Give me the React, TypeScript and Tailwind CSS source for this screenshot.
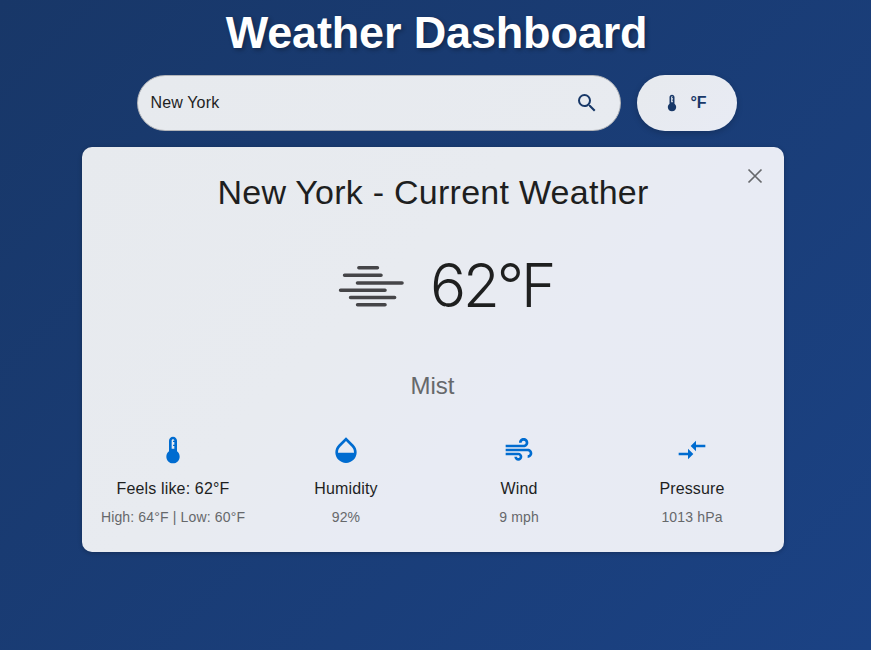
import type { ReactNode } from "react";
import {
  MdAir,
  MdCompareArrows,
  MdDeviceThermostat,
  MdOpacity,
  MdSearch,
} from "react-icons/md";

function MistIcon() {
  return (
    <svg
      width="100"
      height="100"
      viewBox="0 0 100 100"
      fill="none"
      stroke="#454548"
      strokeWidth="3.6"
      strokeLinecap="round"
    >
      <path d="M38.9 29.8H57.4M24.6 37.3H61M37.5 45H82M20.6 52.3H65M30.6 59.5H74.6M37.6 66.8H65" />
    </svg>
  );
}

function Stat({ icon, title, detail }: { icon: ReactNode; title: string; detail: string }) {
  return (
    <div className="flex flex-col items-center whitespace-nowrap text-center">
      <div className="size-8 text-[#006cd0]">{icon}</div>
      <div className="mt-[11px] pl-px text-[16px] leading-6 tracking-[0.15px]">{title}</div>
      <div className="mt-[6px] pl-px text-[14px] leading-5 tracking-[0.15px] text-[#66686b]">{detail}</div>
    </div>
  );
}

export default function App() {
  return (
    <div className="h-[650px] w-full overflow-hidden bg-linear-135 from-[#183768] to-[#1b4284] font-['Liberation_Sans',Arial,sans-serif] text-[#1e1f1f]">
      <h1 className="h-[75px] pt-[6px] pl-[2px] text-center text-[45px] leading-[54px] font-bold tracking-[-0.15px] text-white [text-shadow:2px_2px_4px_rgba(0,0,0,0.3)]">
        Weather Dashboard
      </h1>
      <div className="ml-[137px] flex gap-4">
        <div className="flex h-14 w-[484px] items-center justify-between rounded-full border border-[#b3b5b9] bg-linear-135 from-[#e7eaee] to-[#e8ebf0] pr-[21px] pl-[12.5px]">
          <span className="text-[16px] tracking-[0.15px]">New York</span>
          <MdSearch className="size-6 text-[#183868]" />
        </div>
        <button className="flex h-14 w-[100px] items-center justify-center gap-2 rounded-full bg-linear-135 from-[#e7eaee] to-[#e8ebf4] pr-[5px] text-[16px] font-bold text-[#183868] shadow-[0_2px_6px_rgba(0,0,0,0.2)]">
          <MdDeviceThermostat className="size-5" />
          °F
        </button>
      </div>
      <main className="mt-4 ml-[82px] h-[405px] w-[702px] rounded-[10px] bg-[linear-gradient(135deg,#e7eaee_0%,#e8ebf0_40%,#e8ebf4_60%,#e8ebf3_100%)] pt-[17px] pr-[6px] pl-[4px] shadow-[0_1px_4px_rgba(0,0,0,0.25)]">
        <div className="flex h-6 justify-end pr-[11px]">
          <svg className="size-6" viewBox="0 0 24 24" stroke="#66686b" strokeWidth="1.7">
            <path d="M5.5 5.5L18.5 18.5M18.5 5.5L5.5 18.5" />
          </svg>
        </div>
        <h2 className="-mt-[17px] pl-[2px] text-center text-[34px] leading-[42px] tracking-[0.25px]">
          New York - Current Weather
        </h2>
        <div className="mt-[25px] ml-[234px] flex h-[100px] items-center gap-[10px]">
          <MistIcon />
          <span className="-mt-[6px] font-[Inter] text-[60px] leading-[72px] font-light tracking-[-3.1px]">
            62°F
          </span>
        </div>
        <p className="mt-[32px] pl-px text-center text-[24px] leading-8 text-[#66686b]">Mist</p>
        <div className="mt-[32px] grid grid-cols-4">
          <Stat
            icon={<MdDeviceThermostat className="size-8" />}
            title="Feels like: 62°F"
            detail="High: 64°F | Low: 60°F"
          />
          <Stat icon={<MdOpacity className="size-8" />} title="Humidity" detail="92%" />
          <Stat icon={<MdAir className="size-8" />} title="Wind" detail="9 mph" />
          <Stat icon={<MdCompareArrows className="size-8" />} title="Pressure" detail="1013 hPa" />
        </div>
      </main>
    </div>
  );
}
